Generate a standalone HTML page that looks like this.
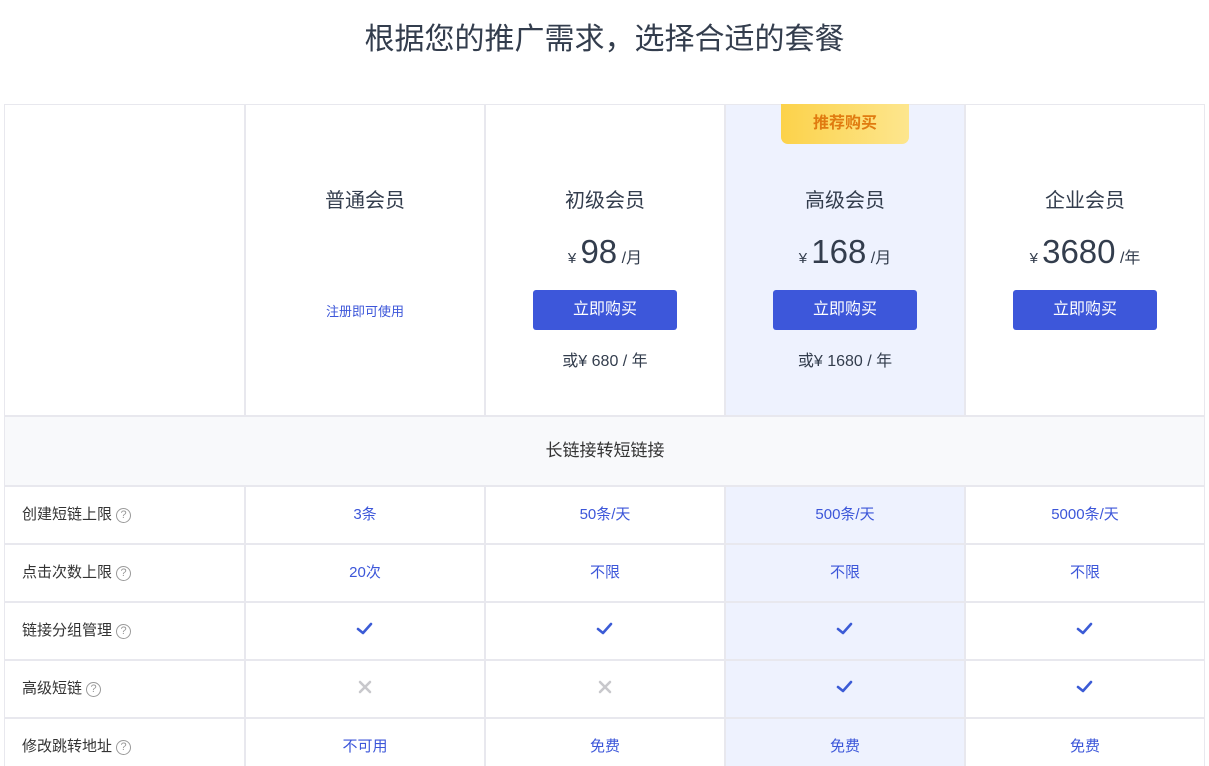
<!DOCTYPE html>
<html><head><meta charset="utf-8"><style>
*{margin:0;padding:0;box-sizing:border-box}
body{width:1209px;height:766px;overflow:hidden;background:#fff;font-family:"Liberation Sans","Noto Sans CJK SC",sans-serif;color:#333d4d;position:relative}
.a{position:absolute}
.c{position:absolute;text-align:center;width:240px}
.v{line-height:1}
.vl{position:absolute;width:2px;background:#e8e8ee}
.hl{position:absolute;height:2px;background:#e8e8ee;left:5px;width:1200px}
.btn{position:absolute;width:144px;height:40px;top:290px;background:#3d57da;border-radius:3px;color:#fff;font-size:16px;line-height:40px;text-align:center}
.lab{position:absolute;left:22px;font-size:15px;color:#333;line-height:20px}
.q{display:inline-block;width:15px;height:15px;border:1px solid #999;border-radius:50%;font-size:11px;line-height:13px;text-align:center;color:#999;vertical-align:1px;margin-left:4px}
.val{position:absolute;width:240px;text-align:center;font-size:15px;color:#3c56d9;line-height:20px}
</style></head><body>
<div class="a" style="left:0;width:1209px;top:20px;text-align:center;font-size:30px;line-height:40px;color:#333d4d">根据您的推广需求，选择合适的套餐</div>
<div class="a" style="left:725px;top:104px;width:240px;height:662px;background:#eef2fe"></div>
<div class="a" style="left:5px;top:416px;width:1200px;height:70px;background:#f8f9fb"></div>
<div class="a" style="left:5px;top:104px;width:1200px;height:1px;background:#e8e8ee"></div>
<div class="hl" style="top:415px"></div>
<div class="hl" style="top:485px"></div>
<div class="hl" style="top:543px"></div>
<div class="hl" style="top:601px"></div>
<div class="hl" style="top:659px"></div>
<div class="hl" style="top:717px"></div>
<div class="vl" style="left:4px;top:104px;height:662px;width:1px"></div>
<div class="vl" style="left:1204px;top:104px;height:662px;width:1px"></div>
<div class="vl" style="left:244px;top:104px;height:312px"></div>
<div class="vl" style="left:484px;top:104px;height:312px"></div>
<div class="vl" style="left:724px;top:104px;height:312px"></div>
<div class="vl" style="left:964px;top:104px;height:312px"></div>
<div class="vl" style="left:244px;top:486px;height:280px"></div>
<div class="vl" style="left:484px;top:486px;height:280px"></div>
<div class="vl" style="left:724px;top:486px;height:280px"></div>
<div class="vl" style="left:964px;top:486px;height:280px"></div>

<div class="a" style="left:781px;top:104px;width:128px;height:40px;border-radius:0 0 7px 7px;background:linear-gradient(90deg,#fcd24a,#fde68e);color:#e07b10;font-size:16px;line-height:40px;text-align:center;font-weight:bold">推荐购买</div>

<div class="c" style="left:245px;top:188px;font-size:20px;line-height:26px">普通会员</div>
<div class="c" style="left:485px;top:188px;font-size:20px;line-height:26px">初级会员</div>
<div class="c" style="left:725px;top:188px;font-size:20px;line-height:26px">高级会员</div>
<div class="c" style="left:965px;top:188px;font-size:20px;line-height:26px">企业会员</div>

<div class="c" style="left:245px;top:303px;font-size:13px;color:#3c56d9;line-height:18px">注册即可使用</div>
<div class="c" style="left:485px;top:232px;line-height:40px"><span style="font-size:15px">¥ </span><span style="font-size:33px">98</span><span style="font-size:16px"> /月</span></div>
<div class="c" style="left:725px;top:232px;line-height:40px"><span style="font-size:15px">¥ </span><span style="font-size:33px">168</span><span style="font-size:16px"> /月</span></div>
<div class="c" style="left:965px;top:232px;line-height:40px"><span style="font-size:15px">¥ </span><span style="font-size:33px">3680</span><span style="font-size:16px"> /年</span></div>
<div class="btn" style="left:533px">立即购买</div>
<div class="btn" style="left:773px">立即购买</div>
<div class="btn" style="left:1013px">立即购买</div>
<div class="c" style="left:485px;top:351px;font-size:16px;line-height:22px">或¥ 680 / 年</div>
<div class="c" style="left:725px;top:351px;font-size:16px;line-height:22px">或¥ 1680 / 年</div>

<div class="a" style="left:5px;width:1200px;top:440px;text-align:center;font-size:17px;line-height:22px;color:#333">长链接转短链接</div>

<div class="lab" style="top:505px">创建短链上限<span class="q">?</span></div>
<div class="lab" style="top:563px">点击次数上限<span class="q">?</span></div>
<div class="lab" style="top:621px">链接分组管理<span class="q">?</span></div>
<div class="lab" style="top:679px">高级短链<span class="q">?</span></div>
<div class="lab" style="top:737px">修改跳转地址<span class="q">?</span></div>

<div class="val" style="left:245px;top:505px">3条</div>
<div class="val" style="left:485px;top:505px">50条/天</div>
<div class="val" style="left:725px;top:505px">500条/天</div>
<div class="val" style="left:965px;top:505px">5000条/天</div>
<div class="val" style="left:245px;top:563px">20次</div>
<div class="val" style="left:485px;top:563px">不限</div>
<div class="val" style="left:725px;top:563px">不限</div>
<div class="val" style="left:965px;top:563px">不限</div>
<div class="val" style="left:245px;top:737px">不可用</div>
<div class="val" style="left:485px;top:737px">免费</div>
<div class="val" style="left:725px;top:737px">免费</div>
<div class="val" style="left:965px;top:737px">免费</div>

<svg class="a" style="left:0;top:0" width="1209" height="766">
<g fill="none" stroke="#3b5bd6" stroke-width="2.6" stroke-linecap="round" stroke-linejoin="round">
<path d="M358 629l5 4 8-9"/><path d="M598 629l5 4 8-9"/><path d="M838 629l5 4 8-9"/><path d="M1078 629l5 4 8-9"/>
<path d="M838 687l5 4 8-9"/><path d="M1078 687l5 4 8-9"/>
</g>
<g stroke="#c8c8cc" stroke-width="2.6" stroke-linecap="round">
<path d="M360 682l10 10M370 682l-10 10"/><path d="M600 682l10 10M610 682l-10 10"/>
</g>
</svg>
</body></html>
